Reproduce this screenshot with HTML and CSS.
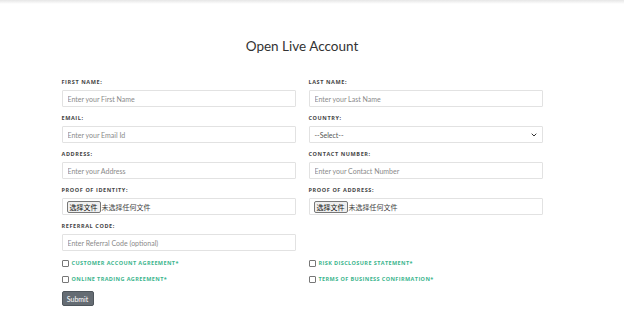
FILE: index.html
```html
<!DOCTYPE html>
<html lang="en">
<head>
    <meta charset="UTF-8">
    <meta name="viewport" content="width=device-width, initial-scale=1.0">
    <title>Open Live Account</title>
    <link rel="stylesheet" href="styles.css">
</head>
<body>
    <div class="topbar"></div>

    <main class="page">
        <h1 class="title">Open Live Account</h1>

        <form class="account-form">
            <div class="grid">
                <div class="field">
                    <label>First Name:</label>
                    <input type="text" placeholder="Enter your First Name">
                </div>
                <div class="field">
                    <label>Last Name:</label>
                    <input type="text" placeholder="Enter your Last Name">
                </div>
                <div class="field">
                    <label>Email:</label>
                    <input type="email" placeholder="Enter your Email Id">
                </div>
                <div class="field">
                    <label>Country:</label>
                    <div class="select">
                        <span>--Select--</span>
                        <svg width="6" height="4" viewBox="0 0 6 4"><path d="M0.7 0.7 L3 3 L5.3 0.7" fill="none" stroke="#333" stroke-width="1"/></svg>
                    </div>
                </div>
                <div class="field">
                    <label>Address:</label>
                    <input type="text" placeholder="Enter your Address">
                </div>
                <div class="field">
                    <label>Contact Number:</label>
                    <input type="text" placeholder="Enter your Contact Number">
                </div>
                <div class="field">
                    <label>Proof of Identity:</label>
                    <div class="file">
                        <span class="file-btn">选择文件</span>
                        <span class="file-name">未选择任何文件</span>
                    </div>
                </div>
                <div class="field">
                    <label>Proof of Address:</label>
                    <div class="file">
                        <span class="file-btn">选择文件</span>
                        <span class="file-name">未选择任何文件</span>
                    </div>
                </div>
                <div class="field">
                    <label>Referral Code:</label>
                    <input type="text" placeholder="Enter Referral Code (optional)">
                </div>
                <div class="field"></div>

                <div class="check first"><span class="box"></span>Customer Account Agreement*</div>
                <div class="check first"><span class="box"></span>Risk Disclosure Statement*</div>
                <div class="check"><span class="box"></span>Online Trading Agreement*</div>
                <div class="check"><span class="box"></span>Terms of Business Confirmation*</div>
            </div>

            <button type="button" class="btn">Submit</button>
        </form>
    </main>
</body>
</html>
```

FILE: styles.css
```css
body {
    margin: 0;
    padding: 0;
    background-color: #fff;
    color: #333;
    font-family: Lato, "Open Sans", sans-serif;
}

.topbar {
    height: 4px;
    background: linear-gradient(#e6e6e6, #fff);
}

.page {
    width: 604px;
}

.title {
    margin: 34px 0 0;
    font-size: 13.5px;
    font-weight: 400;
    line-height: 16px;
    text-align: center;
    color: #333;
}

.account-form {
    width: 481px;
    margin: 24px auto 0;
}

.grid {
    display: grid;
    grid-template-columns: 234px 234px;
    column-gap: 13px;
}

.field {
    height: 36px;
}

.field label {
    display: block;
    font-family: "Open Sans", sans-serif;
    font-size: 5.5px;
    font-weight: 700;
    line-height: 8px;
    letter-spacing: 0.6px;
    text-transform: uppercase;
    color: #444;
    margin-bottom: 4px;
}

.field input,
.select,
.file {
    display: block;
    box-sizing: border-box;
    width: 100%;
    height: 17px;
    border: 1px solid #e2e2e2;
    border-radius: 1px;
    background: #fff;
    font-family: Lato, sans-serif;
    font-size: 7px;
    padding: 0 5px;
    margin: 0;
    outline: none;
}

.field input::placeholder {
    color: #8a8a8a;
}

.select {
    display: flex;
    align-items: center;
    justify-content: space-between;
    color: #555;
}

.file {
    display: flex;
    align-items: center;
    gap: 1px;
    padding: 0 4px;
    font-family: "Noto Sans CJK SC", sans-serif;
}

.file-btn {
    background: #efefef;
    border: 1px solid #777;
    border-radius: 2px;
    font-size: 7px;
    line-height: 10px;
    padding: 0 2px;
    color: #111;
}

.file-name {
    font-size: 7px;
    color: #444;
}

.check {
    display: flex;
    align-items: center;
    height: 16px;
    font-family: "Open Sans", sans-serif;
    font-size: 5.5px;
    font-weight: 700;
    letter-spacing: 0.4px;
    text-transform: uppercase;
    color: #3bb58d;
}

.check.first {
    margin-top: -3px;
}

.box {
    width: 5px;
    height: 5px;
    border: 1px solid #777;
    border-radius: 1px;
    margin-right: 3px;
}

.btn {
    display: block;
    margin-top: 4px;
    width: 32px;
    height: 15px;
    padding: 0;
    background-color: #656c73;
    border: 1px solid #4f565c;
    border-radius: 2px;
    color: #fff;
    font-family: Lato, sans-serif;
    font-size: 7px;
}
```
